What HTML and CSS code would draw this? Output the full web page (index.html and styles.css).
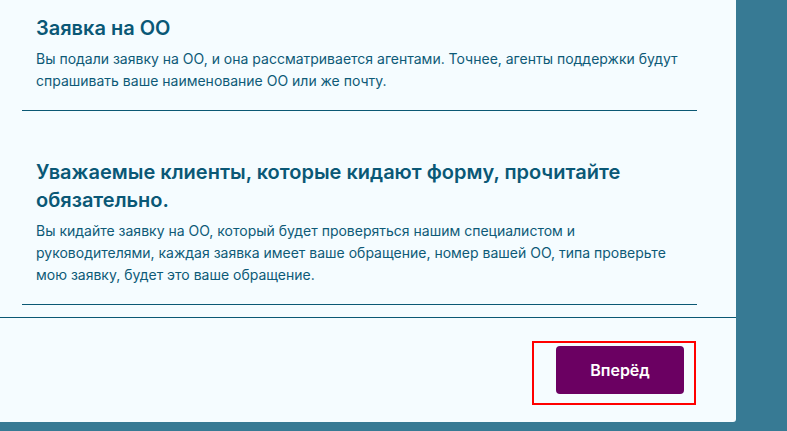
FILE: index.html
```html
<!DOCTYPE html>
<html lang="ru">
<head>
<meta charset="utf-8">
<title>Заявка</title>
<link rel="stylesheet" href="styles.css">
</head>
<body>
<div class="card">
  <div class="sections">
    <section class="section">
      <h2 class="title">Заявка на ОО</h2>
      <p class="text">Вы подали заявку на ОО, и она рассматривается агентами. Точнее, агенты поддержки будут спрашивать ваше наименование ОО или же почту.</p>
    </section>
    <section class="section">
      <h2 class="title">Уважаемые клиенты, которые кидают форму, прочитайте обязательно.</h2>
      <p class="text">Вы кидайте заявку на ОО, который будет проверяться нашим специалистом и руководителями, каждая заявка имеет ваше обращение, номер вашей ОО, типа проверьте мою заявку, будет это ваше обращение.</p>
    </section>
  </div>
  <div class="footer">
    <div class="highlight">
      <button class="btn" type="button">Вперёд</button>
    </div>
  </div>
</div>
</body>
</html>
```

FILE: styles.css
```css
* { box-sizing: border-box; }
html, body { margin: 0; padding: 0; }
body {
  background: #377a94;
  font-family: Inter, "Noto Sans", sans-serif;
  width: 787px;
  height: 431px;
  overflow: hidden;
}
.card {
  width: 736px;
  background: #f5fcff;
  border-bottom-right-radius: 3px;
}
.sections {
  padding: 0 39px 12px 22px;
}
.section {
  padding: 14px 14px 18px;
  border-bottom: 1px solid #0b5874;
}
.section + .section {
  margin-top: 33px;
}
.title {
  margin: 0 0 6px;
  font-size: 20px;
  line-height: 28px;
  font-weight: 600;
  color: #0a5876;
}
.text {
  margin: 0;
  font-size: 14px;
  line-height: 22px;
  font-weight: 400;
  color: #0d5a77;
}
.footer {
  border-top: 1px solid #0b5874;
  display: flex;
  justify-content: flex-end;
  padding: 23px 40px 17px 0;
}
.highlight {
  border: 2px solid #ff0000;
  padding: 3px 10px 9px 22px;
}
.btn {
  display: block;
  width: 128px;
  height: 48px;
  border: none;
  border-radius: 4px;
  background: #6b0062;
  color: #ffffff;
  font-family: Inter, "Noto Sans", sans-serif;
  font-size: 16px;
  font-weight: 600;
}
```
